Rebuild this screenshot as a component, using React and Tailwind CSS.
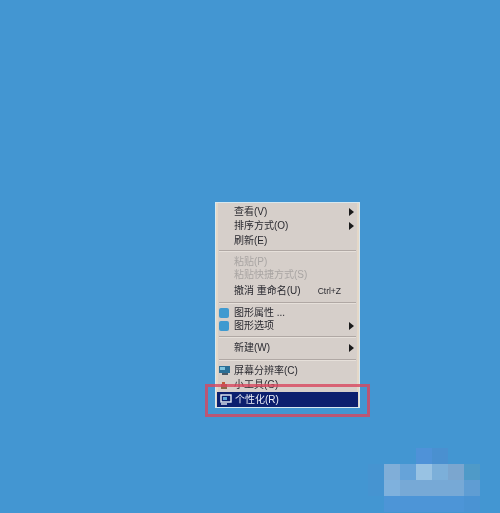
import React from "react";

const font = "font-['Liberation_Sans','Noto_Sans_CJK_SC',sans-serif]";

function Arrow() {
  return (
    <svg width="5" height="8" viewBox="0 0 5 8" className="ml-auto mr-[5px] shrink-0">
      <path d="M0 0 L5 4 L0 8 Z" fill="#1a1a1a" />
    </svg>
  );
}

function Sep({ className }) {
  return <div className={`mx-[3px] h-[2px] border-t border-[#b0a8a4] bg-[#e6e0da] ${className}`} />;
}

function Row({ text, disabled, arrow, hint, icon, className = "" }) {
  return (
    <div className={`flex h-[14px] items-center pl-[3px] text-[10px] leading-none ${disabled ? "text-[#a9a5a3]" : "text-[#2a2a30]"} ${className}`}>
      <div className="flex w-[15px] shrink-0 items-center">{icon}</div>
      <span>{text}</span>
      {hint && <span className="ml-auto mr-[18px] text-[8.5px]">{hint}</span>}
      {arrow && <Arrow />}
    </div>
  );
}

const blueIcon = <div className="h-[10px] w-[10px] rounded-[2px] bg-[#3f9ad0]" />;

const screenIcon = (
  <svg width="11" height="10" viewBox="0 0 11 10">
    <rect x="0" y="0" width="11" height="7" fill="#2b6f96" />
    <rect x="1" y="1" width="5" height="3" fill="#7fc4de" />
    <rect x="3" y="7" width="6" height="2" fill="#4b5a66" />
  </svg>
);

const gadgetIcon = (
  <svg width="10" height="10" viewBox="0 0 10 10">
    <rect x="2" y="4" width="6" height="5" fill="#8a6a4a" />
    <rect x="3" y="2" width="3" height="3" fill="#c05a3a" />
  </svg>
);

const personalIcon = (
  <svg width="12" height="11" viewBox="0 0 12 11" fill="none">
    <rect x="1" y="1" width="10" height="7" stroke="#e8eef5" strokeWidth="1.4" />
    <path d="M1 10 H7" stroke="#e8eef5" strokeWidth="1.4" />
    <rect x="3" y="3" width="4" height="3" fill="#5fa8d8" />
  </svg>
);

// mosaic cells in the bottom right corner
const mosaic = [
  ["bg-[#4396d2]", "bg-[#4396d2]", "bg-[#4396d2]", "bg-[#4f92d8]", "bg-[#4a90d0]", "bg-[#4396d2]", "bg-[#4396d2]", "bg-[#4396d2]"],
  ["bg-[#4694d1]", "bg-[#80aed8]", "bg-[#66a3d9]", "bg-[#98c2e3]", "bg-[#7cafd9]", "bg-[#7ba6cf]", "bg-[#4f9ac8]", "bg-[#4396d2]"],
  ["bg-[#4694d1]", "bg-[#7fb1dd]", "bg-[#77a9d6]", "bg-[#77a9d6]", "bg-[#77a9d6]", "bg-[#77a9d6]", "bg-[#5f9dd3]", "bg-[#4396d2]"],
  ["bg-[#4396d2]", "bg-[#4d95d7]", "bg-[#4d95d7]", "bg-[#4d95d7]", "bg-[#4d95d7]", "bg-[#4d95d7]", "bg-[#4a93d3]", "bg-[#4396d2]"],
];

export default function App() {
  return (
    <div className={`relative flex h-[513px] w-[500px] flex-col overflow-hidden bg-[#4396d2] pl-[215px] pt-[202px] ${font}`}>
      {/* context menu */}
      <div className="relative h-[206px] w-[145px] border border-[#d8e8ef] bg-[#d6cfca] pt-[1px] shadow-[inset_2px_0_0_#e4d8c8,inset_-2px_0_0_#e4d8c8]">
        <div className="blur-[0.5px]">
          <Row text="查看(V)" arrow className="mt-[1px]" />
          <Row text="排序方式(O)" arrow />
          <Row text="刷新(E)" className="mt-[1px]" />
          <Sep className="mt-[2px] mb-[3px]" />
          <Row text="粘贴(P)" disabled className="mt-[2px]" />
          <Row text="粘贴快捷方式(S)" disabled className="-mt-[1px]" />
          <Row text="撤消 重命名(U)" hint="Ctrl+Z" className="mt-[2px]" />
          <Sep className="mt-[4px] mb-[2px]" />
          <Row text="图形属性 ..." icon={blueIcon} />
          <Row text="图形选项" icon={blueIcon} arrow className="-mt-[1px]" />
          <Sep className="my-[3px]" />
          <Row text="新建(W)" arrow />
          <Sep className="mt-[4px] mb-[3px]" />
          <Row text="屏幕分辨率(C)" icon={screenIcon} />
          <Row text="小工具(G)" icon={gadgetIcon} />
          <Row text="个性化(R)" icon={personalIcon} className="mx-[1px] h-[15px] bg-[#0c1f6e] !text-[#eef0f8]" />
        </div>

        {/* red annotation box */}
        <div className="absolute -left-[11px] top-[181px] h-[33px] w-[165px] border-[3px] border-[#d9475f] opacity-80 blur-[0.4px]" />
      </div>

      {/* mosaic */}
      <div className="absolute left-[368px] top-[448px] grid grid-cols-[repeat(8,16px)] grid-rows-[repeat(4,16px)]">
        {mosaic.flat().map((c, i) => (
          <div key={i} className={c} />
        ))}
      </div>
    </div>
  );
}
